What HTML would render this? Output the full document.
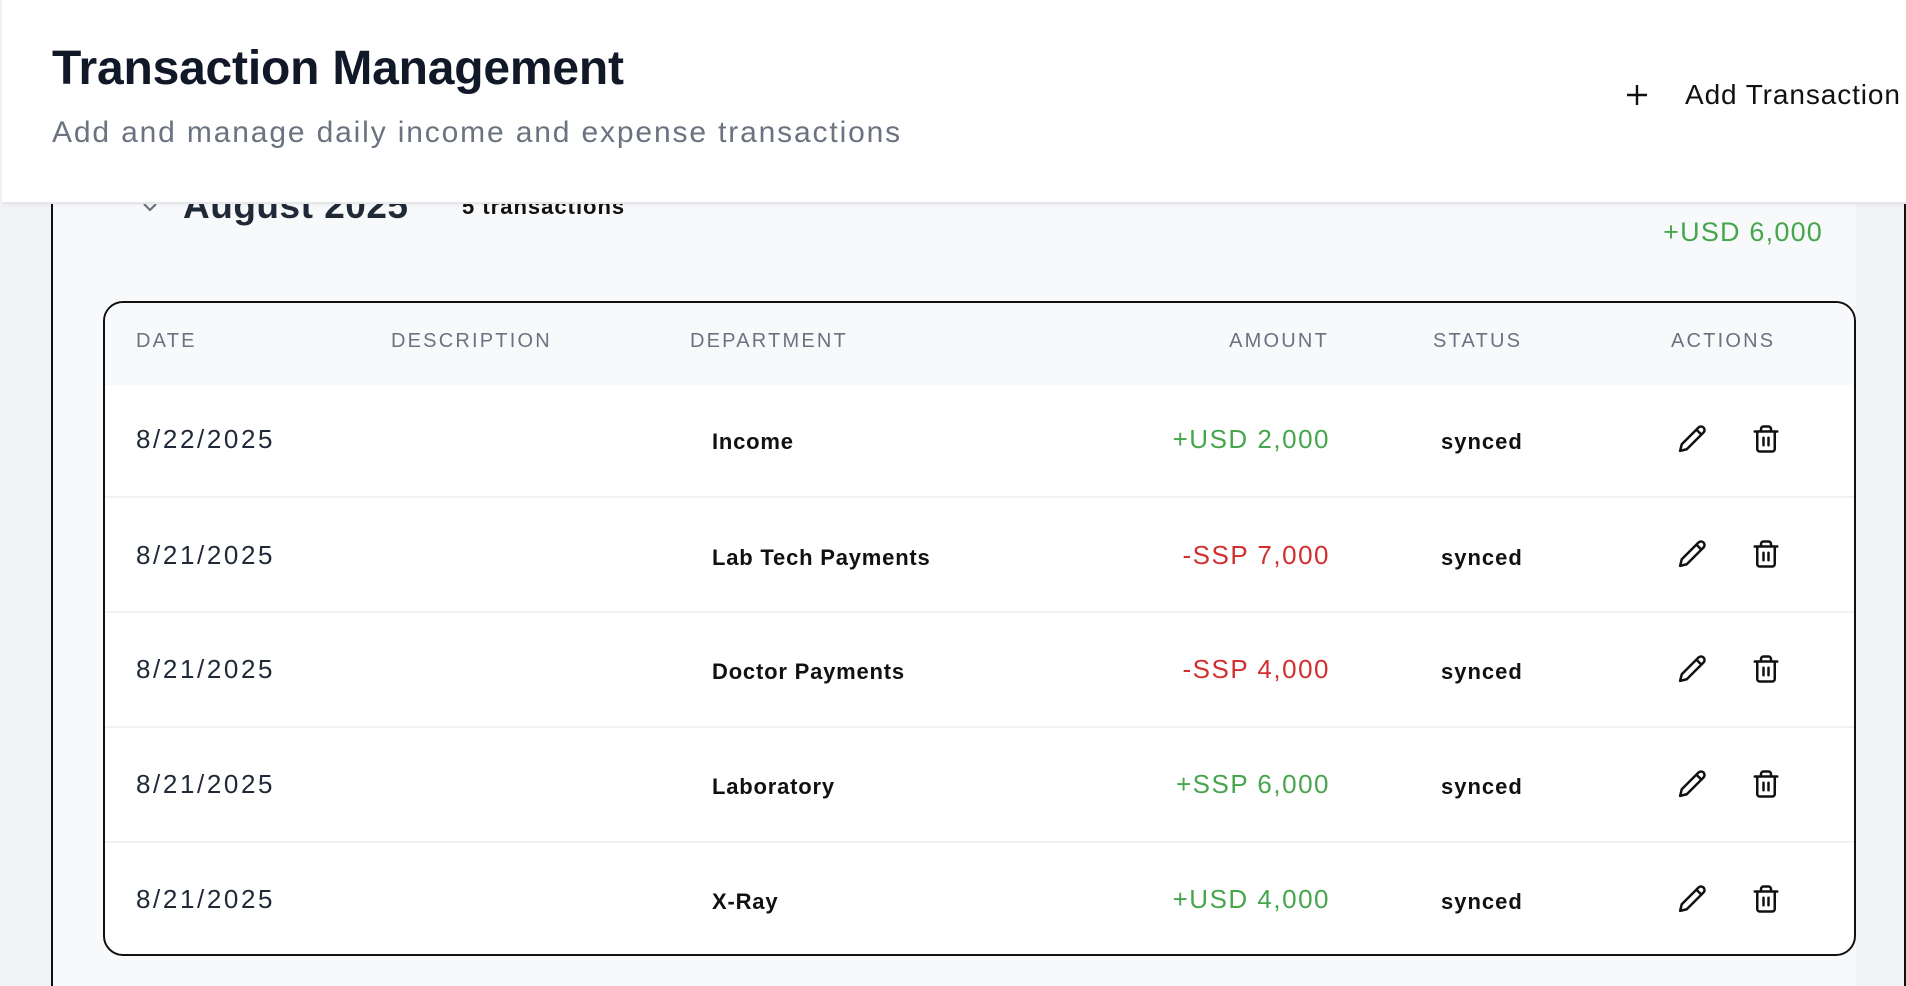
<!DOCTYPE html>
<html><head><meta charset="utf-8"><style>
*{margin:0;padding:0;box-sizing:border-box}
body{width:1906px;height:986px;overflow:hidden;background:#f8f9fb;font-family:"Liberation Sans",Arial,sans-serif;position:relative}
.abs{position:absolute;white-space:nowrap}
.hdr{position:absolute;left:2px;top:0;width:1904px;height:204px;background:#fff;border-bottom:2px solid #e5e7eb;box-shadow:0 1px 3px rgba(0,0,0,.06);z-index:5}
.th{position:absolute;top:329px;font-size:20px;color:#6b7280;letter-spacing:2.2px;line-height:24px}
.date{font-size:26px;color:#1f2937;line-height:30px;letter-spacing:2.6px}
.dept{font-size:22px;font-weight:bold;color:#111;line-height:26px;letter-spacing:0.8px}
.amt{font-size:26px;line-height:30px;text-align:right;width:300px;letter-spacing:1.5px}
.g{color:#46a64c}.r{color:#d32f2f}
.st{font-size:22px;font-weight:bold;color:#111;line-height:26px;letter-spacing:1px}
.sep{position:absolute;left:105px;width:1749px;height:2px;background:#f1f2f4}
</style></head><body>
<div class="abs" style="left:0;top:0;width:51px;height:986px;background:#f2f3f5"></div>
<div class="abs" style="left:51px;top:0;width:2px;height:986px;background:#111"></div>
<div class="abs" style="left:1856px;top:0;width:48px;height:986px;background:#f2f3f5"></div>
<div class="abs" style="left:1904px;top:0;width:2px;height:986px;background:#111"></div>

<div class="hdr">
  <div class="abs" style="left:50px;top:42px;font-size:48px;font-weight:bold;color:#111827;line-height:54px;letter-spacing:-0.2px">Transaction Management</div>
  <div class="abs" style="left:50px;top:116px;font-size:30px;color:#6b7280;line-height:34px;letter-spacing:1.85px">Add and manage daily income and expense transactions</div>
  <svg class="abs" style="left:1622px;top:82px" width="26" height="26" viewBox="0 0 26 26"><path d="M13 3v20M3 13h20" stroke="#111" stroke-width="2.4" fill="none"/></svg>
  <div class="abs" style="left:1683px;top:79px;font-size:28px;font-weight:500;color:#111;line-height:32px;letter-spacing:0.9px">Add Transaction</div>
</div>

<svg class="abs" style="left:141px;top:200px" width="18" height="14" viewBox="0 0 18 14"><path d="M3 4l6 6 6-6" stroke="#6b7280" stroke-width="2.2" fill="none"/></svg>
<div class="abs" style="left:183px;top:185px;font-size:37px;font-weight:bold;color:#1f2937;line-height:42px;letter-spacing:0.5px">August 2025</div>
<div class="abs" style="left:462px;top:195px;font-size:22px;font-weight:bold;color:#111;line-height:24px;letter-spacing:1px">5 transactions</div>
<div class="abs g" style="left:1500px;top:216px;width:323px;text-align:right;font-size:27px;font-weight:500;line-height:32px;letter-spacing:1.2px">+USD 6,000</div>

<div class="abs" style="left:103px;top:301px;width:1753px;height:655px;border:2px solid #111;border-radius:20px;background:#fff;overflow:hidden">
  <div style="position:absolute;left:0;top:0;width:100%;height:82px;background:#f8f9fb"></div>
</div>
<div class="th" style="left:136px">DATE</div>
<div class="th" style="left:391px">DESCRIPTION</div>
<div class="th" style="left:690px">DEPARTMENT</div>
<div class="th" style="left:1129px;width:200px;text-align:right">AMOUNT</div>
<div class="th" style="left:1433px">STATUS</div>
<div class="th" style="left:1671px">ACTIONS</div>

<div class="sep" style="top:496px"></div>
<div class="sep" style="top:611px"></div>
<div class="sep" style="top:726px"></div>
<div class="sep" style="top:841px"></div>

<div class="abs date" style="left:136px;top:424px">8/22/2025</div>
<div class="abs dept" style="left:712px;top:429px">Income</div>
<div class="abs amt g" style="left:1030px;top:424px">+USD 2,000</div>
<div class="abs st" style="left:1441px;top:429px">synced</div>

<div class="abs date" style="left:136px;top:540px">8/21/2025</div>
<div class="abs dept" style="left:712px;top:545px">Lab Tech Payments</div>
<div class="abs amt r" style="left:1030px;top:540px">-SSP 7,000</div>
<div class="abs st" style="left:1441px;top:545px">synced</div>

<div class="abs date" style="left:136px;top:654px">8/21/2025</div>
<div class="abs dept" style="left:712px;top:659px">Doctor Payments</div>
<div class="abs amt r" style="left:1030px;top:654px">-SSP 4,000</div>
<div class="abs st" style="left:1441px;top:659px">synced</div>

<div class="abs date" style="left:136px;top:769px">8/21/2025</div>
<div class="abs dept" style="left:712px;top:774px">Laboratory</div>
<div class="abs amt g" style="left:1030px;top:769px">+SSP 6,000</div>
<div class="abs st" style="left:1441px;top:774px">synced</div>

<div class="abs date" style="left:136px;top:884px">8/21/2025</div>
<div class="abs dept" style="left:712px;top:889px">X-Ray</div>
<div class="abs amt g" style="left:1030px;top:884px">+USD 4,000</div>
<div class="abs st" style="left:1441px;top:889px">synced</div>

<svg width="0" height="0" style="position:absolute"><defs>
<g id="pen"><path d="M21.2 6.8a2.8 2.8 0 0 0-4-4L3.8 16.2 2.5 21.5l5.3-1.3z M15.5 4.5l4 4" fill="none" stroke="#111" stroke-width="2" stroke-linejoin="round" stroke-linecap="round"/></g>
<g id="trash"><path d="M3 6h18 M19 6v14a2 2 0 0 1-2 2H7a2 2 0 0 1-2-2V6 M8 6V4a2 2 0 0 1 2-2h4a2 2 0 0 1 2 2v2 M10 11v6 M14 11v6" fill="none" stroke="#111" stroke-width="2" stroke-linecap="round" stroke-linejoin="round"/></g>
</defs></svg>
<svg class="abs" style="left:1677px;top:424px" width="30" height="30" viewBox="0 0 24 24"><use href="#pen"/></svg>
<svg class="abs" style="left:1751px;top:424px" width="30" height="30" viewBox="0 0 24 24"><use href="#trash"/></svg>
<svg class="abs" style="left:1677px;top:539px" width="30" height="30" viewBox="0 0 24 24"><use href="#pen"/></svg>
<svg class="abs" style="left:1751px;top:539px" width="30" height="30" viewBox="0 0 24 24"><use href="#trash"/></svg>
<svg class="abs" style="left:1677px;top:654px" width="30" height="30" viewBox="0 0 24 24"><use href="#pen"/></svg>
<svg class="abs" style="left:1751px;top:654px" width="30" height="30" viewBox="0 0 24 24"><use href="#trash"/></svg>
<svg class="abs" style="left:1677px;top:769px" width="30" height="30" viewBox="0 0 24 24"><use href="#pen"/></svg>
<svg class="abs" style="left:1751px;top:769px" width="30" height="30" viewBox="0 0 24 24"><use href="#trash"/></svg>
<svg class="abs" style="left:1677px;top:884px" width="30" height="30" viewBox="0 0 24 24"><use href="#pen"/></svg>
<svg class="abs" style="left:1751px;top:884px" width="30" height="30" viewBox="0 0 24 24"><use href="#trash"/></svg>
</body></html>
